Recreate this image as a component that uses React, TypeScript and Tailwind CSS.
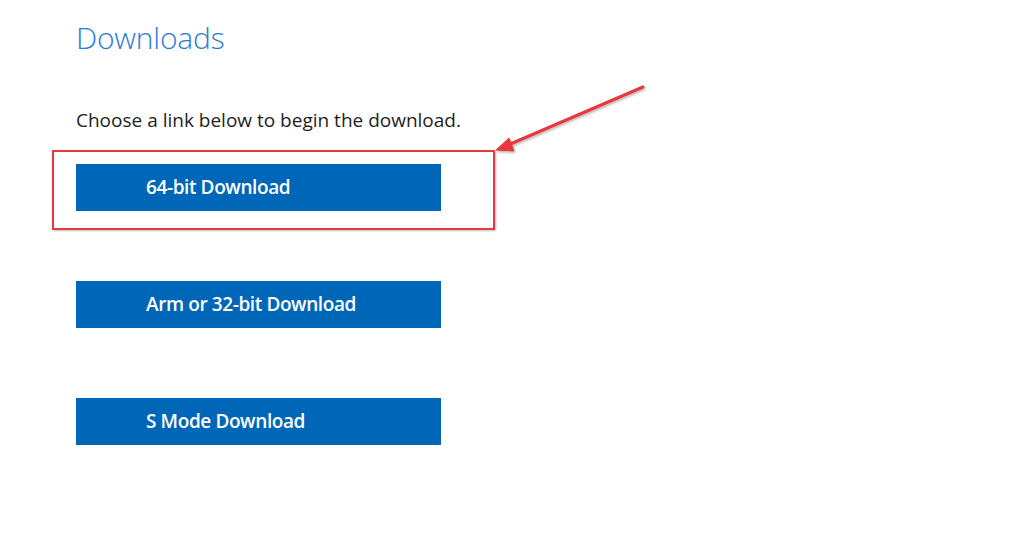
import React from "react";

export default function App() {
  const btn =
    "flex items-center h-[47px] w-[365px] bg-[#0067b8] text-white pl-[70px] text-[19px] font-semibold tracking-[-0.4px]";
  return (
    <div
      className="relative w-[1012px] h-[534px] bg-white overflow-hidden"
      style={{ fontFamily: '"Open Sans", "Noto Sans", sans-serif' }}
    >
      <div className="flex flex-col pl-[76px] pt-[18px]">
        <h1 className="text-[30px] leading-[40px] font-light text-[#2b7cd3] tracking-[-0.2px]">
          Downloads
        </h1>
        <p className="mt-[50px] text-[19px] leading-[24px] text-[#1e1e1e]">
          Choose a link below to begin the download.
        </p>
        <div className="mt-[32px] flex flex-col gap-[70px]">
          <a className={btn}>64-bit Download</a>
          <a className={btn}>Arm or 32-bit Download</a>
          <a className={btn}>S Mode Download</a>
        </div>
      </div>
      <div className="absolute left-[52px] top-[150px] w-[443px] h-[80px] border-2 border-[#e8383d] shadow-[1px_1px_2px_rgba(0,0,0,0.25)]" />
      <svg
        className="absolute left-0 top-0"
        width="1012"
        height="534"
        viewBox="0 0 1012 534"
      >
        <defs>
          <filter id="sh" x="-10%" y="-10%" width="120%" height="130%">
            <feDropShadow dx="1" dy="1.5" stdDeviation="1" floodColor="#000" floodOpacity="0.3" />
          </filter>
        </defs>
        <g filter="url(#sh)" fill="#e8383d" stroke="#e8383d">
          <line x1="643" y1="87" x2="508" y2="145" strokeWidth="3" strokeLinecap="round" />
          <polygon points="496,150 509,138 514,151" strokeWidth="1" strokeLinejoin="round" />
        </g>
      </svg>
    </div>
  );
}
